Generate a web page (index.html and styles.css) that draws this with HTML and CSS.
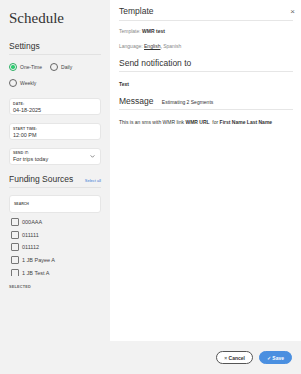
FILE: index.html
```html
<!DOCTYPE html>
<html lang="en">
<head>
    <meta charset="UTF-8">
    <title>Schedule</title>
    <link rel="stylesheet" href="styles.css">
</head>
<body>
    <div class="page">
        <div class="sidebar">
            <h1 class="title">Schedule</h1>
            <h3 class="section-title">Settings</h3>
            <div class="radios">
                <label class="radio"><span class="dot checked"></span>One-Time</label>
                <label class="radio"><span class="dot"></span>Daily</label>
                <label class="radio"><span class="dot"></span>Weekly</label>
            </div>
            <div class="field">
                <div class="field-label">Date:</div>
                <div class="field-value">04-18-2025</div>
            </div>
            <div class="field">
                <div class="field-label">Start time:</div>
                <div class="field-value">12:00 PM</div>
            </div>
            <div class="field select">
                <div>
                    <div class="field-label">Send it:</div>
                    <div class="field-value">For trips today</div>
                </div>
                <svg class="chevron" width="5" height="3" viewBox="0 0 6 4"><path d="M0.5 0.5 L3 3 L5.5 0.5" fill="none" stroke="#555" stroke-width="0.9"/></svg>
            </div>
            <div class="section-head">
                <h3 class="section-title">Funding Sources</h3>
                <a class="select-all">Select all</a>
            </div>
            <div class="search">Search</div>
            <div class="check-list">
                <label class="check"><span class="box"></span>000AAA</label>
                <label class="check"><span class="box"></span>011111</label>
                <label class="check"><span class="box"></span>011112</label>
                <label class="check"><span class="box"></span>1 JB Payee A</label>
                <label class="check"><span class="box"></span>1 JB Test A</label>
            </div>
            <div class="selected">Selected</div>
        </div>

        <div class="panel">
            <div class="panel-head">
                <h2>Template</h2>
                <span class="close">&times;</span>
            </div>
            <div class="meta"><span class="muted">Template:</span> <b>WMR test</b></div>
            <div class="meta"><span class="muted">Language:</span> <u>English</u>, <span class="muted">Spanish</span></div>
            <h2 class="panel-title">Send notification to</h2>
            <div class="meta"><b>Text</b></div>
            <h2 class="panel-title">Message <span class="estimate">Estimating 2 Segments</span></h2>
            <div class="meta">This is an sms with WMR link <b>WMR URL</b> &nbsp;for <b>First Name Last Name</b></div>
        </div>
    </div>
    <div class="footer">
        <button class="btn cancel"><span class="x">&times;</span> Cancel</button>
        <button class="btn save">&#10003; Save</button>
    </div>
</body>
</html>
```

FILE: styles.css
```css
body {
    margin: 0;
    background-color: #f2f2f2;
    font-family: 'Liberation Sans', Arial, sans-serif;
    color: #333;
}
.page {
    display: flex;
    height: 341px;
}
.sidebar {
    width: 110px;
    box-sizing: border-box;
    padding: 0 9px;
}
.title {
    font-family: 'Liberation Serif', serif;
    font-weight: normal;
    font-size: 15px;
    margin: 10px 0 14px;
}
.section-title {
    font-weight: normal;
    font-size: 8.5px;
    margin: 0;
    padding-bottom: 3px;
    border-bottom: 1px solid #e2e2e2;
}
.radios {
    display: flex;
    flex-wrap: wrap;
    column-gap: 8px;
    row-gap: 8px;
    margin: 8px 0 11px;
}
.radio {
    display: flex;
    align-items: center;
    font-size: 5px;
    color: #444;
}
.dot {
    width: 6px;
    height: 6px;
    border: 0.8px solid #666;
    border-radius: 50%;
    margin-right: 3px;
    position: relative;
}
.dot.checked {
    border-color: #27ae60;
}
.dot.checked::after {
    content: "";
    position: absolute;
    left: 1.3px;
    top: 1.3px;
    width: 3.4px;
    height: 3.4px;
    border-radius: 50%;
    background-color: #2ecc71;
}
.field {
    background-color: white;
    border: 1px solid #e6e6e6;
    border-radius: 3px;
    height: 17px;
    box-sizing: border-box;
    padding: 3px 3px 0;
    margin-bottom: 8px;
}
.field-label {
    font-size: 3.5px;
    font-weight: bold;
    text-transform: uppercase;
    color: #555;
    letter-spacing: 0.2px;
}
.field-value {
    font-size: 5.5px;
    margin-top: 1px;
}
.select {
    display: flex;
    justify-content: space-between;
    align-items: center;
    padding-top: 0;
}
.chevron {
    margin-right: 2px;
}
.section-head {
    display: flex;
    align-items: baseline;
    justify-content: space-between;
    border-bottom: 1px solid #e2e2e2;
    margin-top: 9px;
}
.section-head .section-title {
    border-bottom: none;
}
.select-all {
    font-size: 4px;
    color: #3a7bd5;
}
.search {
    background-color: white;
    border: 1px solid #e6e6e6;
    border-radius: 3px;
    height: 18px;
    box-sizing: border-box;
    padding-left: 4px;
    display: flex;
    align-items: center;
    font-size: 3.5px;
    font-weight: bold;
    text-transform: uppercase;
    color: #555;
    margin-top: 7px;
}
.check-list {
    height: 60px;
    overflow: hidden;
    margin-top: 3px;
}
.check {
    display: flex;
    align-items: center;
    height: 12.6px;
    font-size: 5.5px;
    color: #444;
}
.box {
    width: 6px;
    height: 6px;
    border: 0.8px solid #777;
    border-radius: 1px;
    margin: 0 3px 0 2px;
}
.selected {
    font-size: 3.8px;
    font-weight: bold;
    text-transform: uppercase;
    color: #666;
    letter-spacing: 0.2px;
    margin-top: 9px;
}
.panel {
    flex: 1;
    background-color: white;
    padding: 0 8px 0 9px;
}
.panel-head {
    display: flex;
    justify-content: space-between;
    align-items: center;
    border-bottom: 1px solid #e6e6e6;
    padding: 6px 0 4px;
    margin-bottom: 7px;
}
.panel-head h2, .panel-title {
    font-weight: normal;
    font-size: 8.5px;
    margin: 0;
}
.close {
    font-size: 8px;
    color: #666;
    margin-right: -2px;
}
.meta {
    font-size: 5px;
    margin-bottom: 9px;
}
.muted {
    color: #888;
}
.panel-title {
    border-bottom: 1px solid #e6e6e6;
    padding-bottom: 3px;
    margin: 9px 0 9px;
}
.estimate {
    font-size: 5px;
    margin-left: 6px;
}
.footer {
    display: flex;
    justify-content: flex-end;
    gap: 6px;
    padding: 10px 9px 0;
}
.btn {
    font-family: 'Liberation Sans', Arial, sans-serif;
    font-size: 5px;
    font-weight: bold;
    height: 13px;
    border-radius: 7px;
    padding: 0 7px;
    cursor: pointer;
}
.cancel {
    background-color: white;
    border: 1px solid #555;
    color: #333;
}
.cancel .x {
    color: #666;
}
.save {
    background-color: #4a8fe0;
    border: 1px solid #4a8fe0;
    color: white;
}
```
